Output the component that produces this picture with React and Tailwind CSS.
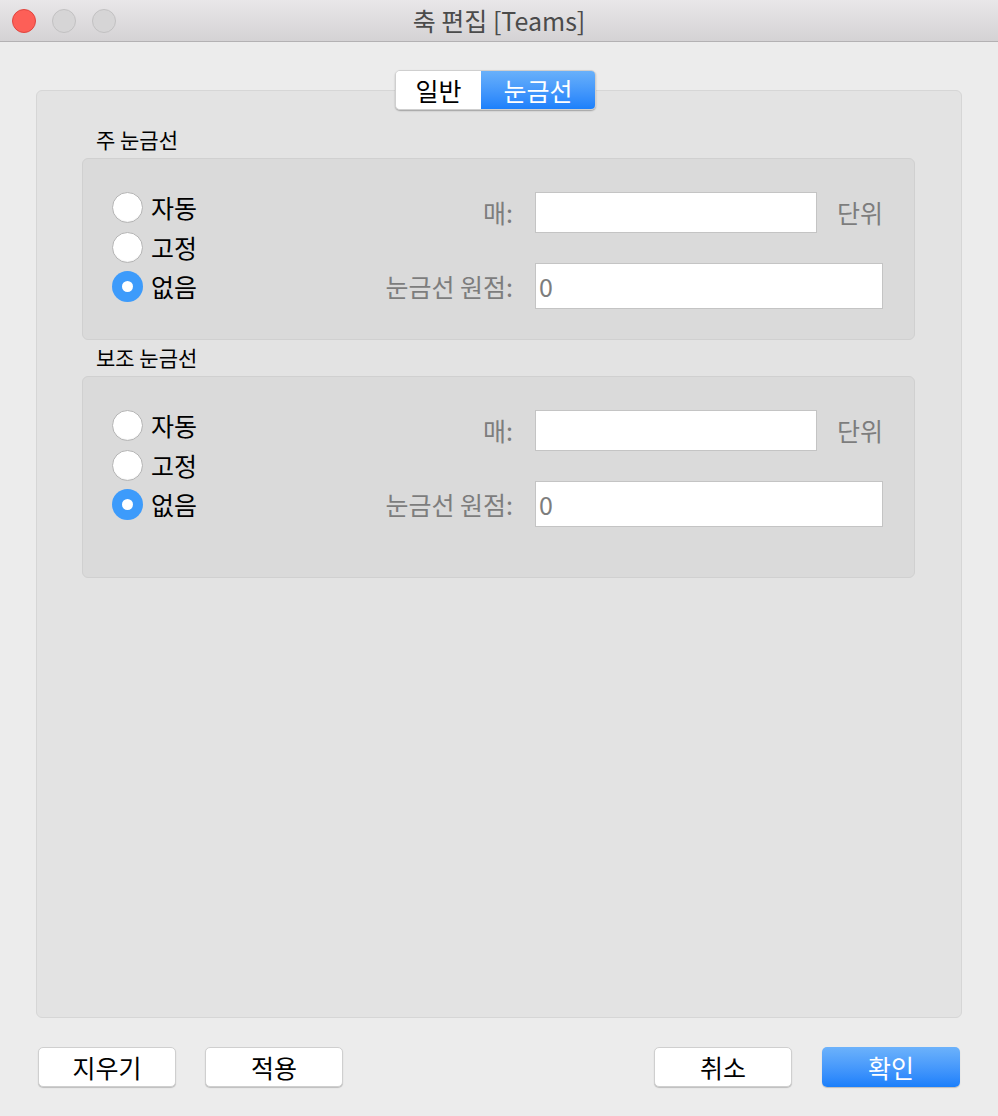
import React from 'react';

const font = { fontFamily: '"Noto Sans CJK KR", "Noto Sans", sans-serif' };

function Radio({ label, checked }) {
  return (
    <div className="flex items-center h-[39.5px]">
      {checked ? (
        <div className="w-[31px] h-[31px] rounded-full bg-[#3d9bfb] flex items-center justify-center">
          <div className="w-[11px] h-[11px] rounded-full bg-white" />
        </div>
      ) : (
        <div className="w-[31px] h-[31px] rounded-full bg-white border border-[#b4b4b4] shadow-[inset_0_-1px_1px_rgba(0,0,0,0.05)]" />
      )}
      <span className="ml-[8px] text-[25px] text-black leading-none">{label}</span>
    </div>
  );
}

function TickGroup({ title, heightClass }) {
  return (
    <div>
      <div className="ml-[60px] h-[32px] text-[21px] text-black leading-[26px]">{title}</div>
      <div className={`mx-[46px] ${heightClass} bg-[#dadada] border border-[#d0d0d0] rounded-[6px] flex items-start`}>
        <div className="pl-[29px] pt-[29px]">
          <Radio label="자동" />
          <Radio label="고정" />
          <Radio label="없음" checked />
        </div>
        <div className="ml-auto mr-[31px] mt-[33px] grid grid-cols-[150px_auto] gap-x-[22px] gap-y-[30px] items-center content-start">
          <span className="text-right text-[25px] text-[#7d7d7d] leading-none">매:</span>
          <div className="flex items-center">
            <div className="w-[282px] h-[41px] bg-white border border-[#c4c4c4]" />
            <span className="ml-[20px] text-[25px] text-[#7d7d7d] leading-none">단위</span>
          </div>
          <span className="text-right text-[25px] text-[#7d7d7d] leading-none">눈금선 원점:</span>
          <div className="w-[348px] h-[46px] bg-white border border-[#c4c4c4] flex items-center pl-[3px] text-[25px] text-[#7d7d7d] leading-none">
            0
          </div>
        </div>
      </div>
    </div>
  );
}

function Button({ label, primary }) {
  return primary ? (
    <button className="w-[138px] h-[40px] rounded-[5px] bg-gradient-to-b from-[#6cb2fb] to-[#1a7ffb] text-white text-[25px] leading-none shadow-[0_1px_1px_rgba(0,0,0,0.2)]">
      {label}
    </button>
  ) : (
    <button className="w-[138px] h-[40px] rounded-[5px] bg-white border border-[#cfcfcf] text-black text-[25px] leading-none shadow-[0_1px_1px_rgba(0,0,0,0.2)]">
      {label}
    </button>
  );
}

export default function App() {
  return (
    <div className="w-[998px] h-[1116px] bg-[#ececec] flex flex-col" style={font}>
      <div className="h-[42px] bg-gradient-to-b from-[#e9e7e9] to-[#d4d2d4] border-b border-[#b3b1b3] flex items-center relative">
        <div className="flex gap-[16px] ml-[12px]">
          <div className="w-[24px] h-[24px] rounded-full bg-[#fd5f57] border border-[#e0443e]" />
          <div className="w-[24px] h-[24px] rounded-full bg-[#d6d5d6] border border-[#c2c1c2]" />
          <div className="w-[24px] h-[24px] rounded-full bg-[#d6d5d6] border border-[#c2c1c2]" />
        </div>
        <div className="absolute inset-0 flex items-center justify-center text-[25px] text-[#4b4b4b] leading-none">
          축 편집 [Teams]
        </div>
      </div>

      <div className="relative mt-[48px] mx-[36px] h-[928px] bg-[#e3e3e3] border border-[#d6d6d6] rounded-[6px]">
        <div className="absolute -top-[21px] left-[358px] flex h-[40px] rounded-[5px] overflow-hidden shadow-[0_1px_1.5px_rgba(0,0,0,0.3)] border border-[#cfcfcf]">
          <div className="w-[85px] bg-white flex items-center justify-center text-[25px] text-black leading-none">일반</div>
          <div className="w-[114px] bg-gradient-to-b from-[#68b0fa] to-[#1c80fb] flex items-center justify-center text-[25px] text-white leading-none">눈금선</div>
        </div>

        <div className="pt-[35px] -ml-[1px]">
          <TickGroup title="주 눈금선" heightClass="h-[182px]" />
          <div className="h-[4px]" />
          <TickGroup title="보조 눈금선" heightClass="h-[202px]" />
        </div>
      </div>

      <div className="mt-[29px] mx-[38px] flex items-center">
        <Button label="지우기" />
        <div className="w-[29px]" />
        <Button label="적용" />
        <div className="flex-1" />
        <Button label="취소" />
        <div className="w-[30px]" />
        <Button label="확인" primary />
      </div>
    </div>
  );
}
